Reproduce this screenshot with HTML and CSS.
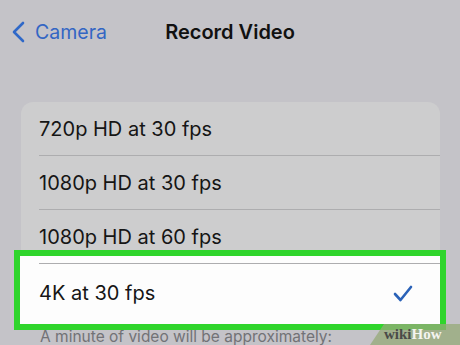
FILE: index.html
```html
<!DOCTYPE html>
<html lang="en">
<head>
  <meta charset="UTF-8" />
  <title>Record Video</title>
  <link rel="stylesheet" href="styles.css">
</head>
<body>
  <div class="nav">
    <a class="back" href="#">
      <svg width="15" height="22" viewBox="0 0 15 22"><path d="M12 2 L3 11 L12 20" fill="none" stroke="#2f68c8" stroke-width="2.6" stroke-linecap="round" stroke-linejoin="round"/></svg>
      <span>Camera</span>
    </a>
    <div class="title">Record Video</div>
    <div></div>
  </div>

  <div class="card">
    <div class="mark"></div>
    <div class="row">720p HD at 30 fps</div>
    <div class="row">1080p HD at 30 fps</div>
    <div class="row">1080p HD at 60 fps</div>
    <div class="row selected">
      <span>4K at 30 fps</span>
      <svg width="20" height="17" viewBox="0 0 20 17"><path d="M2 9 L7.5 15 L18 2" fill="none" stroke="#2a62b8" stroke-width="2.6" stroke-linecap="round" stroke-linejoin="round"/></svg>
    </div>
  </div>
  <p class="note">A minute of video will be approximately:</p>

  <div class="wm"><b>wiki</b><span>How</span></div>
</body>
</html>
```

FILE: styles.css
```css
body {
  margin: 0;
  background: #c4c3c8;
  font-family: Inter, "Liberation Sans", sans-serif;
  height: 345px;
  overflow: hidden;
  position: relative;
}
.nav {
  display: grid;
  grid-template-columns: 1fr auto 1fr;
  align-items: center;
  height: 64px;
}
.back {
  display: flex;
  align-items: center;
  gap: 9px;
  padding-left: 11px;
  color: #3366c4;
  text-decoration: none;
  font-size: 19.5px;
}
.title {
  font-size: 20px;
  font-weight: 600;
  color: #111;
}
.card {
  position: relative;
  margin: 38px 20px 0 21px;
  background: #cdcdce;
  border-radius: 12px;
}
.row {
  position: relative;
  height: 53px;
  display: flex;
  align-items: center;
  justify-content: space-between;
  margin-left: 18px;
  padding-right: 27px;
  font-size: 20px;
  color: #151515;
  border-bottom: 1px solid #adadaf;
}
.row.selected {
  border-bottom: none;
  height: 58px;
}
.mark {
  position: absolute;
  left: -7px;
  right: -6px;
  top: 148px;
  height: 68px;
  background: #fdfdfd;
  border: 6px solid #2fd52c;
}
.note {
  margin: 5px 0 0 40px;
  font-size: 15.5px;
  color: #727276;
}
.wm {
  position: absolute;
  right: 0;
  bottom: 0;
  width: 76px;
  height: 21px;
  padding-left: 14px;
  background: rgba(150, 170, 120, 0.75);
  clip-path: polygon(14px 0, 100% 0, 100% 100%, 0 100%);
  font-family: "Liberation Serif", serif;
  font-weight: bold;
  font-size: 15px;
  line-height: 21px;
}
.wm b {
  color: #4a4a48;
}
.wm span {
  color: #f4f4f0;
}
```
